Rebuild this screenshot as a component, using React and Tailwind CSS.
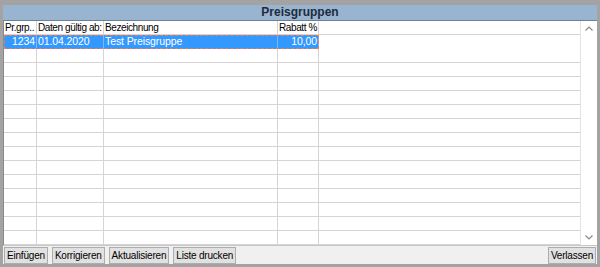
import React from "react";

const cols = [
  { key: "grp", label: "Pr.grp..", w: "w-[33px]", align: "text-right" },
  { key: "date", label: "Daten gültig ab:", w: "w-[67px]", align: "text-left" },
  { key: "name", label: "Bezeichnung", w: "w-[174px]", align: "text-left" },
  { key: "rabatt", label: "Rabatt %", w: "w-[41px]", align: "text-right" },
];

const rows = [
  { grp: "1234", date: "01.04.2020", name: "Test Preisgruppe", rabatt: "10,00" },
  ...Array.from({ length: 14 }, () => ({ grp: "", date: "", name: "", rabatt: "" })),
];

const Btn = ({ children }) => (
  <button className="h-[17px] px-[2px] bg-[#e1e1e1] border border-[#adadad] text-[10px] tracking-[-0.2px] leading-[15px] text-black">
    {children}
  </button>
);

const App = () => {
  return (
    <div
      className="w-[600px] h-[267px] bg-[#a3a3a3] pt-[5px] pl-[3px] pr-[3px] pb-[3px] flex flex-col"
      style={{ fontFamily: '"Liberation Sans", Arial, sans-serif' }}
    >
      <div className="h-[16px] bg-[#99b4d1] border-b border-[#6e8094] text-center text-[12px] leading-[15px] font-bold text-[#1e2b3c]">
        Preisgruppen
      </div>

      <div className="flex h-[224px] bg-white border-l border-[#8a8a8a]">
        <div className="flex-1">
          <div className="flex h-[14px] border-b border-[#d4d4d4]">
            {cols.map((c) => (
              <div
                key={c.key}
                className={`${c.w} border-r border-[#d4d4d4] px-[1px] text-[10px] tracking-[-0.4px] leading-[13px] text-black text-left whitespace-nowrap overflow-hidden`}
              >
                {c.label}
              </div>
            ))}
          </div>
          {rows.map((r, i) => (
            <div
              key={i}
              className={
                i === 0
                  ? "flex h-[14px] w-[315px] bg-[#3399ff] outline outline-1 outline-dashed outline-[#f07a5a] -outline-offset-1"
                  : "flex h-[14px] border-b border-[#d4d4d4]"
              }
            >
              {cols.map((c) => (
                <div
                  key={c.key}
                  className={`${c.w} border-r ${i === 0 ? "border-[#7fb8f0] text-white" : "border-[#d4d4d4] text-black"} px-[1px] text-[10.5px] tracking-[-0.1px] leading-[13px] ${c.align} whitespace-nowrap overflow-hidden`}
                >
                  {r[c.key]}
                </div>
              ))}
            </div>
          ))}
        </div>

        <div className="w-[16px] bg-white border-l border-[#e3e3e3] flex flex-col justify-between items-center mr-[1px]">
          <svg width="16" height="16" viewBox="0 0 16 16">
            <path d="M4.5 9.5 L8 6 L11.5 9.5" fill="none" stroke="#8a8a8a" strokeWidth="1.2" />
          </svg>
          <svg width="16" height="16" viewBox="0 0 16 16">
            <path d="M4.5 6.5 L8 10 L11.5 6.5" fill="none" stroke="#8a8a8a" strokeWidth="1.2" />
          </svg>
        </div>
      </div>

      <div className="flex-1 bg-[#f0f0f0] border-t border-[#c8c8c8] flex items-end justify-between pl-[1px] pr-[1px] pb-0">
        <div className="flex gap-[4px]">
          <Btn>Einfügen</Btn>
          <Btn>Korrigieren</Btn>
          <Btn>Aktualisieren</Btn>
          <Btn>Liste drucken</Btn>
        </div>
        <Btn>Verlassen</Btn>
      </div>
    </div>
  );
};

export default App;
